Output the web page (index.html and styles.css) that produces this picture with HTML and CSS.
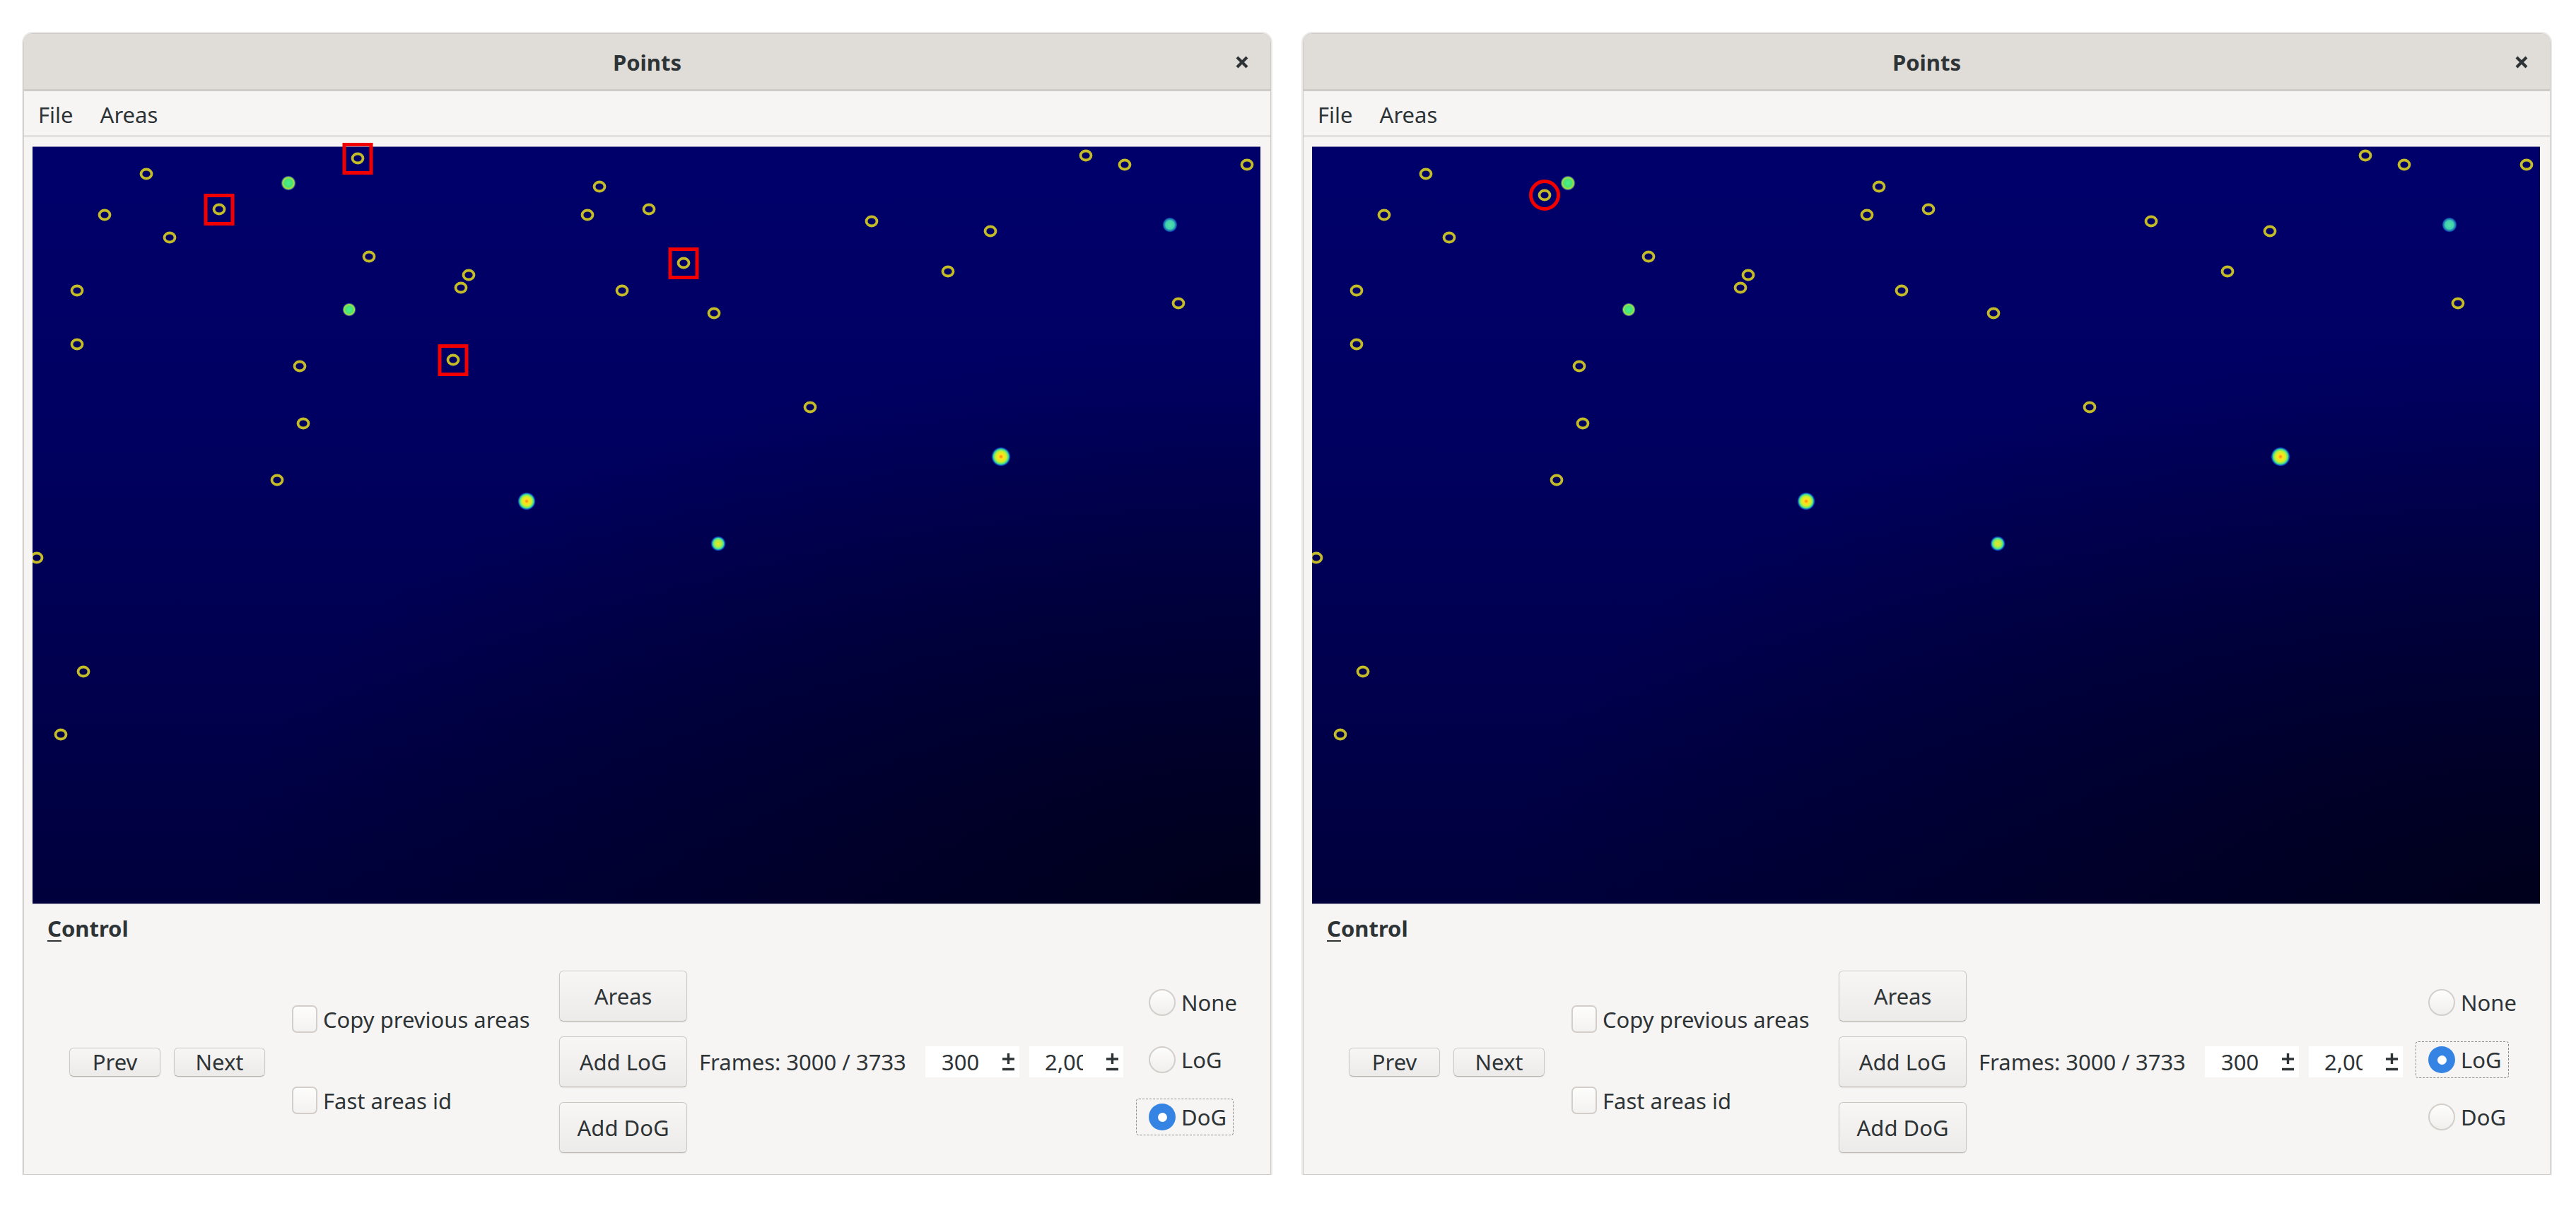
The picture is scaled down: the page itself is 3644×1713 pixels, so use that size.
FILE: index.html
```html
<!DOCTYPE html>
<html lang="en">
<head>
<meta charset="utf-8">
<title>Points</title>
<link rel="stylesheet" href="styles.css">
</head>
<body>
<svg class="defs" width="0" height="0" aria-hidden="true">
  <defs>
    <ellipse id="ring" cx="0" cy="0" rx="7.5" ry="6.5" fill="none" stroke="#c4bb28" stroke-width="3.8"/>
    <radialGradient id="g-green">
      <stop offset="0" stop-color="#4cf08e"/>
      <stop offset="0.5" stop-color="#48e474"/>
      <stop offset="0.75" stop-color="#b0e03a"/>
      <stop offset="0.9" stop-color="#2a70b0" stop-opacity="0.6"/>
      <stop offset="1" stop-color="#000080" stop-opacity="0"/>
    </radialGradient>
    <radialGradient id="g-hot">
      <stop offset="0" stop-color="#ff7a20"/>
      <stop offset="0.25" stop-color="#ffe418"/>
      <stop offset="0.55" stop-color="#c8f030"/>
      <stop offset="0.75" stop-color="#40e090"/>
      <stop offset="0.9" stop-color="#1060e0" stop-opacity="0.7"/>
      <stop offset="1" stop-color="#000080" stop-opacity="0"/>
    </radialGradient>
    <radialGradient id="g-warm">
      <stop offset="0" stop-color="#e8e428"/>
      <stop offset="0.45" stop-color="#a8ee44"/>
      <stop offset="0.7" stop-color="#38dca8"/>
      <stop offset="0.9" stop-color="#0c50e0" stop-opacity="0.6"/>
      <stop offset="1" stop-color="#000080" stop-opacity="0"/>
    </radialGradient>
    <radialGradient id="g-cyan">
      <stop offset="0" stop-color="#50e0a8"/>
      <stop offset="0.55" stop-color="#40d0b0"/>
      <stop offset="0.85" stop-color="#1880d0" stop-opacity="0.7"/>
      <stop offset="1" stop-color="#000080" stop-opacity="0"/>
    </radialGradient>
    <clipPath id="clip"><rect x="0" y="0" width="1737" height="1070"/></clipPath>
  </defs>
</svg>

<div class="desk">

  <!-- LEFT WINDOW -->
  <div class="window">
    <header class="titlebar">
      <span class="title">Points</span>
      <span class="close">
        <svg width="20" height="20" viewBox="0 0 20 20"><path d="M3 3 L17 17 M17 3 L3 17" stroke="#2e3436" stroke-width="4.2" fill="none"/></svg>
      </span>
    </header>
    <nav class="menubar"><span>File</span><span>Areas</span></nav>
    <div class="view">
      <div class="canvas">
        <svg width="1737" height="1070" viewBox="0 0 1737 1070">
          <g clip-path="url(#clip)">
            <circle cx="362" cy="51" r="11" fill="url(#g-green)"/>
            <circle cx="448" cy="230" r="10" fill="url(#g-green)"/>
            <circle cx="699" cy="501" r="13" fill="url(#g-hot)"/>
            <circle cx="1370" cy="438" r="14" fill="url(#g-hot)"/>
            <circle cx="970" cy="561" r="11" fill="url(#g-warm)"/>
            <circle cx="1609" cy="110" r="11" fill="url(#g-cyan)"/>
            <use href="#ring" x="161" y="38"/>
            <use href="#ring" x="102" y="96"/>
            <use href="#ring" x="194" y="128"/>
            <use href="#ring" x="476" y="155"/>
            <use href="#ring" x="617" y="181"/>
            <use href="#ring" x="606" y="199"/>
            <use href="#ring" x="802" y="56"/>
            <use href="#ring" x="785" y="96"/>
            <use href="#ring" x="872" y="88"/>
            <use href="#ring" x="834" y="203"/>
            <use href="#ring" x="63" y="203"/>
            <use href="#ring" x="63" y="279"/>
            <use href="#ring" x="378" y="310"/>
            <use href="#ring" x="383" y="391"/>
            <use href="#ring" x="346" y="471"/>
            <use href="#ring" x="6" y="581"/>
            <use href="#ring" x="1490" y="12"/>
            <use href="#ring" x="1545" y="25"/>
            <use href="#ring" x="1718" y="25"/>
            <use href="#ring" x="1187" y="105"/>
            <use href="#ring" x="1355" y="119"/>
            <use href="#ring" x="1295" y="176"/>
            <use href="#ring" x="1621" y="221"/>
            <use href="#ring" x="964" y="235"/>
            <use href="#ring" x="1100" y="368"/>
            <use href="#ring" x="72" y="742"/>
            <use href="#ring" x="40" y="831"/>
            <use href="#ring" x="460" y="16"/>
            <use href="#ring" x="264" y="88"/>
            <use href="#ring" x="921" y="164"/>
            <use href="#ring" x="595" y="301"/>
          </g>
          <g fill="none" stroke="#f20000" stroke-width="5">
            <rect x="441" y="-3.5" width="38" height="40"/>
            <rect x="245" y="68.5" width="38" height="40"/>
            <rect x="902" y="144.5" width="38" height="40"/>
            <rect x="576" y="281.5" width="38" height="40"/>
          </g>
        </svg>
      </div>
    </div>
    <section class="control">
      <div class="frame-label"><u>C</u>ontrol</div>
      <div class="row">
        <div class="nav">
          <button class="btn btn-small">Prev</button>
          <button class="btn btn-small">Next</button>
        </div>
        <div class="checks">
          <label class="check"><span class="box"></span>Copy previous areas</label>
          <label class="check"><span class="box"></span>Fast areas id</label>
        </div>
        <div class="actions">
          <button class="btn btn-big">Areas</button>
          <button class="btn btn-big">Add LoG</button>
          <button class="btn btn-big">Add DoG</button>
        </div>
        <div class="frames">Frames: 3000 / 3733</div>
        <div class="spin">
          <span class="val">300</span>
          <svg class="pm" width="23" height="25" viewBox="0 0 23 25"><path d="M11.5 0 V15 M3 8 H20 M3 22.5 H20" stroke="#2e3436" stroke-width="3.4" fill="none"/></svg>
        </div>
        <div class="spin spin2">
          <span class="val">2,00</span>
          <svg class="pm" width="23" height="25" viewBox="0 0 23 25"><path d="M11.5 0 V15 M3 8 H20 M3 22.5 H20" stroke="#2e3436" stroke-width="3.4" fill="none"/></svg>
        </div>
        <div class="radios">
          <div class="radio"><span class="dot"></span>None</div>
          <div class="radio"><span class="dot"></span>LoG</div>
          <div class="radio on focus"><span class="dot"></span>DoG</div>
        </div>
      </div>
    </section>
  </div>

  <!-- RIGHT WINDOW -->
  <div class="window">
    <header class="titlebar">
      <span class="title">Points</span>
      <span class="close">
        <svg width="20" height="20" viewBox="0 0 20 20"><path d="M3 3 L17 17 M17 3 L3 17" stroke="#2e3436" stroke-width="4.2" fill="none"/></svg>
      </span>
    </header>
    <nav class="menubar"><span>File</span><span>Areas</span></nav>
    <div class="view">
      <div class="canvas">
        <svg width="1737" height="1070" viewBox="0 0 1737 1070">
          <g clip-path="url(#clip)">
            <circle cx="362" cy="51" r="11" fill="url(#g-green)"/>
            <circle cx="448" cy="230" r="10" fill="url(#g-green)"/>
            <circle cx="699" cy="501" r="13" fill="url(#g-hot)"/>
            <circle cx="1370" cy="438" r="14" fill="url(#g-hot)"/>
            <circle cx="970" cy="561" r="11" fill="url(#g-warm)"/>
            <circle cx="1609" cy="110" r="11" fill="url(#g-cyan)"/>
            <use href="#ring" x="161" y="38"/>
            <use href="#ring" x="102" y="96"/>
            <use href="#ring" x="194" y="128"/>
            <use href="#ring" x="476" y="155"/>
            <use href="#ring" x="617" y="181"/>
            <use href="#ring" x="606" y="199"/>
            <use href="#ring" x="802" y="56"/>
            <use href="#ring" x="785" y="96"/>
            <use href="#ring" x="872" y="88"/>
            <use href="#ring" x="834" y="203"/>
            <use href="#ring" x="63" y="203"/>
            <use href="#ring" x="63" y="279"/>
            <use href="#ring" x="378" y="310"/>
            <use href="#ring" x="383" y="391"/>
            <use href="#ring" x="346" y="471"/>
            <use href="#ring" x="6" y="581"/>
            <use href="#ring" x="1490" y="12"/>
            <use href="#ring" x="1545" y="25"/>
            <use href="#ring" x="1718" y="25"/>
            <use href="#ring" x="1187" y="105"/>
            <use href="#ring" x="1355" y="119"/>
            <use href="#ring" x="1295" y="176"/>
            <use href="#ring" x="1621" y="221"/>
            <use href="#ring" x="964" y="235"/>
            <use href="#ring" x="1100" y="368"/>
            <use href="#ring" x="72" y="742"/>
            <use href="#ring" x="40" y="831"/>
            <use href="#ring" x="329" y="68"/>
          </g>
          <circle cx="329" cy="68" r="19.5" fill="none" stroke="#f20000" stroke-width="5"/>
        </svg>
      </div>
    </div>
    <section class="control">
      <div class="frame-label"><u>C</u>ontrol</div>
      <div class="row">
        <div class="nav">
          <button class="btn btn-small">Prev</button>
          <button class="btn btn-small">Next</button>
        </div>
        <div class="checks">
          <label class="check"><span class="box"></span>Copy previous areas</label>
          <label class="check"><span class="box"></span>Fast areas id</label>
        </div>
        <div class="actions">
          <button class="btn btn-big">Areas</button>
          <button class="btn btn-big">Add LoG</button>
          <button class="btn btn-big">Add DoG</button>
        </div>
        <div class="frames">Frames: 3000 / 3733</div>
        <div class="spin">
          <span class="val">300</span>
          <svg class="pm" width="23" height="25" viewBox="0 0 23 25"><path d="M11.5 0 V15 M3 8 H20 M3 22.5 H20" stroke="#2e3436" stroke-width="3.4" fill="none"/></svg>
        </div>
        <div class="spin spin2">
          <span class="val">2,00</span>
          <svg class="pm" width="23" height="25" viewBox="0 0 23 25"><path d="M11.5 0 V15 M3 8 H20 M3 22.5 H20" stroke="#2e3436" stroke-width="3.4" fill="none"/></svg>
        </div>
        <div class="radios">
          <div class="radio"><span class="dot"></span>None</div>
          <div class="radio on focus"><span class="dot"></span>LoG</div>
          <div class="radio"><span class="dot"></span>DoG</div>
        </div>
      </div>
    </section>
  </div>

</div>
</body>
</html>
```

FILE: styles.css
```css
html, body {
  margin: 0;
  background: #ffffff;
}

body {
  font-family: "Noto Sans", "Open Sans", sans-serif;
  color: #2e3436;
  font-size: 31px;
}

.defs {
  display: block;
  width: 0;
  height: 0;
  overflow: hidden;
}

.desk {
  display: flex;
  gap: 45px;
  padding: 47px 0 0 33px;
}

.window {
  width: 1765px;
  height: 1615px;
  flex: none;
  box-sizing: border-box;
  border: 1px solid #cfcac5;
  border-radius: 13px 13px 0 0;
  background: #f6f5f4;
  box-shadow: 0 0 0 2px #ebe9e7;
  display: flex;
  flex-direction: column;
}

.titlebar {
  height: 81px;
  flex: none;
  box-sizing: border-box;
  border-bottom: 3px solid #cfcbc6;
  background: #e0ddd9;
  border-radius: 12px 12px 0 0;
  display: grid;
  grid-template-columns: 1fr auto 1fr;
  align-items: center;
  padding: 2px 30px 0;
}

.title {
  grid-column: 2;
  font-weight: 700;
  font-size: 31px;
}

.close {
  grid-column: 3;
  justify-self: end;
  width: 20px;
  height: 20px;
  display: flex;
}

.menubar {
  height: 65px;
  flex: none;
  box-sizing: border-box;
  border-bottom: 3px solid #e3e0dd;
  display: flex;
  align-items: center;
  gap: 38px;
  padding: 4px 20px 0;
  font-size: 31px;
}

.view {
  padding: 14px 14px 0 12px;
}

.canvas {
  width: 1737px;
  height: 1070px;
  background:
    radial-gradient(ellipse 85% 75% at 100% 100%, rgba(0, 0, 16, 0.75), rgba(0, 0, 16, 0) 100%),
    linear-gradient(to bottom, #00006b 0%, #000062 35%, #00004e 70%, #00003c 100%);
  box-shadow: 0 -1px 0 #7e7cb0, 0 1px 0 #9a9cae;
}

.canvas svg {
  display: block;
  overflow: visible;
}

.control {
  padding: 14px 0 0 33px;
}

.frame-label {
  font-weight: 700;
  font-size: 31px;
  line-height: 42px;
}

.frame-label u {
  text-decoration-thickness: 2px;
  text-underline-offset: 5px;
}

.row {
  display: flex;
  align-items: center;
  height: 258px;
  margin: 39px 0 0 31px;
}

.nav {
  display: flex;
  gap: 19px;
}

.btn {
  font-family: inherit;
  font-size: 31px;
  color: #2e3436;
  background: linear-gradient(#f7f6f5, #edebe9);
  border: 1px solid #cdc7c2;
  border-bottom-color: #b9b2ab;
  border-radius: 6px;
  box-shadow: 0 1px 2px rgba(0, 0, 0, 0.07);
  padding: 0;
  margin: 0;
  display: flex;
  align-items: center;
  justify-content: center;
  line-height: 1;
  box-sizing: border-box;
}

.btn-small {
  width: 129px;
  height: 41px;
}

.btn-big {
  width: 181px;
  height: 72px;
}

.checks {
  align-self: flex-start;
  margin-left: 38px;
  width: 340px;
  padding-top: 48px;
  display: flex;
  flex-direction: column;
  gap: 74px;
}

.check {
  display: flex;
  align-items: center;
  gap: 8px;
  height: 41px;
  white-space: nowrap;
}

.box {
  width: 36px;
  height: 39px;
  flex: none;
  box-sizing: border-box;
  border: 2px solid #d3cec9;
  border-radius: 7px;
  background: linear-gradient(#fdfdfc, #f3f2f0);
}

.actions {
  margin-left: 38px;
  display: flex;
  flex-direction: column;
  gap: 21px;
}

.frames {
  margin-left: 17px;
  width: 303px;
  white-space: nowrap;
}

.spin {
  margin-left: 17px;
  width: 133px;
  height: 44px;
  flex: none;
  box-sizing: border-box;
  background: #ffffff;
  display: flex;
  align-items: center;
  padding-left: 23px;
}

.spin2 {
  margin-left: 14px;
  padding-left: 22px;
}

.val {
  width: 54px;
  overflow: hidden;
  white-space: nowrap;
}

.pm {
  margin-left: auto;
  margin-right: 4px;
  flex: none;
}

.radios {
  align-self: flex-start;
  margin-left: 18px;
  padding-top: 19px;
  display: flex;
  flex-direction: column;
  align-items: flex-start;
  gap: 29px;
}

.radio {
  display: flex;
  align-items: center;
  gap: 8px;
  height: 52px;
  box-sizing: border-box;
  padding: 0 9px 0 17px;
  border: 1px dashed transparent;
  border-radius: 4px;
}

.radio.focus {
  border-color: #8f8c89;
}

.dot {
  width: 38px;
  height: 38px;
  flex: none;
  border-radius: 50%;
  box-sizing: border-box;
  border: 2px solid #d3cec9;
  background: linear-gradient(#fdfdfc, #f1efed);
}

.radio.on .dot {
  border: none;
  background: #3584e4;
  display: flex;
  align-items: center;
  justify-content: center;
}

.radio.on .dot::after {
  content: "";
  width: 13px;
  height: 13px;
  border-radius: 50%;
  background: #ffffff;
}
```
